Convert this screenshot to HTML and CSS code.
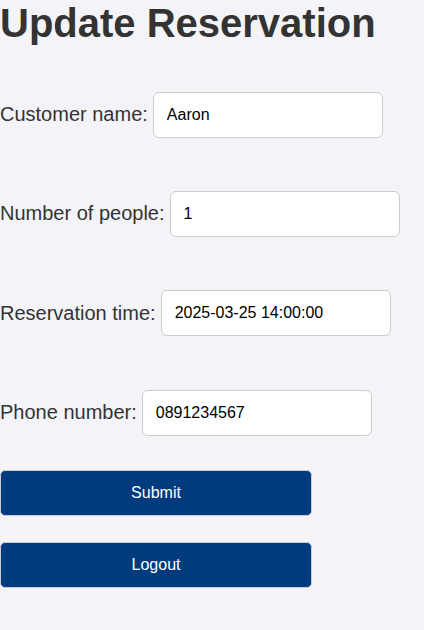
FILE: index.html
```html
<!DOCTYPE html>
<html>
<head>
<meta charset="utf-8">
<link rel="stylesheet" href="styles.css">
</head>
<body>
<h1 class="title">Update Reservation</h1>
<form class="form">
  <div class="row"><label class="label">Customer name:</label><input class="field" type="text" value="Aaron"></div>
  <div class="row"><label class="label">Number of people:</label><input class="field" type="text" value="1"></div>
  <div class="row"><label class="label">Reservation time:</label><input class="field" type="text" value="2025-03-25 14:00:00"></div>
  <div class="row"><label class="label">Phone number:</label><input class="field" type="text" value="0891234567"></div>
  <button class="btn submit" type="button">Submit</button>
  <button class="btn" type="button">Logout</button>
</form>
</body>
</html>
```
FILE: styles.css
```css
html, body {
  margin: 0;
  padding: 0;
  background: #f4f4f8;
  font-family: "Liberation Sans", Arial, sans-serif;
  color: #333;
}
.title {
  margin: 0;
  font-size: 40px;
  line-height: 46px;
  font-weight: bold;
  color: #333;
}
.form {
  display: flex;
  flex-direction: column;
  margin-top: 45.7px;
}
.row {
  display: flex;
  align-items: center;
  height: 46px;
  margin-bottom: 53.3px;
}
.row:nth-child(4) {
  margin-bottom: 34px;
}
.label {
  font-size: 20px;
  color: #333;
  margin-right: 5px;
}
.field {
  box-sizing: border-box;
  width: 230px;
  height: 46px;
  padding: 0 13px;
  border: 1px solid #ccc;
  border-radius: 6px;
  background: #fff;
  font-family: "Liberation Sans", Arial, sans-serif;
  font-size: 16px;
  color: #000;
}
.btn {
  box-sizing: border-box;
  width: 312px;
  height: 46px;
  border: 1px solid #c8cbd6;
  border-radius: 5px;
  background: #003b7d;
  color: #fff;
  font-family: "Liberation Sans", Arial, sans-serif;
  font-size: 16px;
  padding: 0;
}
.submit {
  margin-bottom: 26.4px;
}
```
